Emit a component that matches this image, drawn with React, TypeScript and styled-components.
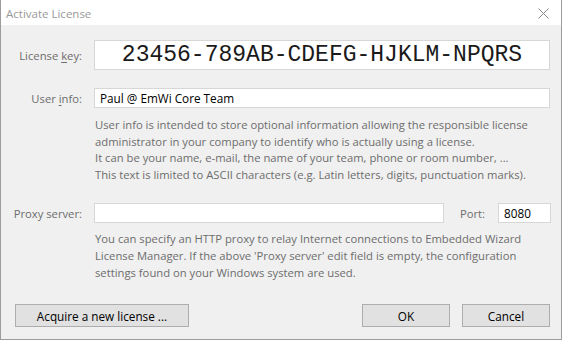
import styled, { createGlobalStyle } from 'styled-components'

const GlobalStyle = createGlobalStyle`
  html, body {
    margin: 0;
    padding: 0;
    background: #ffffff;
  }
  body {
    font-family: 'Open Sans', 'Noto Sans', sans-serif;
    font-size: 11.25px;
  }
`

const userInfoHelp = [
  'User info is intended to store optional information allowing the responsible license',
  'administrator in your company to identify who is actually using a license.',
  'It can be your name, e-mail, the name of your team, phone or room number, ...',
  'This text is limited to ASCII characters (e.g. Latin letters, digits, punctuation marks).',
]

const proxyHelp = [
  'You can specify an HTTP proxy to relay Internet connections to Embedded Wizard',
  "License Manager. If the above 'Proxy server' edit field is empty, the configuration",
  'settings found on your Windows system are used.',
]

export default function App() {
  return (
    <>
      <GlobalStyle />
      <Window>
        <TitleBar>
          <TitleText>Activate License</TitleText>
          <CloseButton>
            <svg width="11" height="11" viewBox="0 0 11 11">
              <path d="M0.5 0.5 L10.5 10.5 M10.5 0.5 L0.5 10.5" stroke="#8a8a8a" strokeWidth="1" fill="none" />
            </svg>
          </CloseButton>
        </TitleBar>

        <Body>
          <FormGrid>
            <Label $top={15}>
              License <u>k</u>ey:
            </Label>
            <KeyField $top={15}>23456-789AB-CDEFG-HJKLM-NPQRS</KeyField>

            <Label $top={18}>
              User <u>i</u>nfo:
            </Label>
            <TextField $top={18}>Paul @ EmWi Core Team</TextField>

            <Spacer />
            <HelpText $top={9}>
              {userInfoHelp.map((line) => (
                <div key={line}>{line}</div>
              ))}
            </HelpText>

            <Label $top={20}>Proxy server:</Label>
            <ProxyRow $top={20}>
              <ProxyField />
              <PortLabel>Port:</PortLabel>
              <PortField>8080</PortField>
            </ProxyRow>

            <Spacer />
            <HelpText $top={8}>
              {proxyHelp.map((line) => (
                <div key={line}>{line}</div>
              ))}
            </HelpText>
          </FormGrid>

          <ButtonBar>
            <Button $width={174}>Acquire a new license ...</Button>
            <ButtonGroup>
              <Button $width={88}>OK</Button>
              <Button $width={88}>Cancel</Button>
            </ButtonGroup>
          </ButtonBar>
        </Body>
      </Window>
    </>
  )
}

const Window = styled.div`
  width: 560px;
  height: 339px;
  border: 1px solid #9c9c9c;
  border-top: none;
  background: #f0f0f0;
  display: flex;
  flex-direction: column;
`
const TitleBar = styled.div`
  height: 25px;
  background: #ffffff;
  display: flex;
  align-items: center;
  justify-content: space-between;
  padding: 0 12px 0 5px;
`
const TitleText = styled.span`
  font-size: 11.5px;
  color: #999999;
  margin-top: 1px;
`
const CloseButton = styled.div`
  display: flex;
  align-items: center;
  margin-top: 2px;
`
const Body = styled.div`
  flex: 1;
  display: flex;
  flex-direction: column;
  padding: 0 11px 12px 0;
`
const FormGrid = styled.div`
  display: grid;
  grid-template-columns: 81px 1fr;
  column-gap: 12px;
  align-items: center;
`
const Label = styled.div<{ $top: number }>`
  margin-top: ${(p) => p.$top}px;
  text-align: right;
  color: #6d6d6d;
  white-space: nowrap;
  u {
    text-decoration-thickness: 1px;
    text-underline-offset: 2px;
  }
`
const Field = styled.div`
  box-sizing: border-box;
  background: #ffffff;
  border: 1px solid #d7d7d7;
  color: #000000;
  white-space: nowrap;
`
const KeyField = styled(Field)<{ $top: number }>`
  margin-top: ${(p) => p.$top}px;
  height: 30px;
  font-family: 'Liberation Mono', 'Courier New', monospace;
  font-size: 23px;
  line-height: 28px;
  text-align: center;
  color: #1a1a1a;
`
const TextField = styled(Field)<{ $top: number }>`
  margin-top: ${(p) => p.$top}px;
  height: 20px;
  line-height: 18px;
  padding-left: 5px;
  font-size: 11.75px;
`
const Spacer = styled.div``
const HelpText = styled.div<{ $top: number }>`
  margin-top: ${(p) => p.$top}px;
  color: #6d6d6d;
  line-height: 16.6px;
  white-space: nowrap;
  padding-left: 1px;
`
const ProxyRow = styled.div<{ $top: number }>`
  margin-top: ${(p) => p.$top}px;
  display: flex;
  align-items: center;
`
const ProxyField = styled(Field)`
  flex: 1;
  height: 20px;
`
const PortLabel = styled.span`
  color: #6d6d6d;
  margin: 0 13px 0 16px;
`
const PortField = styled(Field)`
  width: 53px;
  height: 20px;
  line-height: 18px;
  padding-left: 5px;
  margin-right: -1px;
  font-size: 11.75px;
`
const ButtonBar = styled.div`
  margin-top: auto;
  display: flex;
  justify-content: space-between;
  padding-left: 14px;
`
const ButtonGroup = styled.div`
  display: flex;
  gap: 12px;
`
const Button = styled.div<{ $width: number }>`
  box-sizing: border-box;
  width: ${(p) => p.$width}px;
  height: 23px;
  background: #e1e1e1;
  border: 1px solid #adadad;
  color: #000000;
  font-size: 11.75px;
  display: flex;
  align-items: center;
  justify-content: center;
`
